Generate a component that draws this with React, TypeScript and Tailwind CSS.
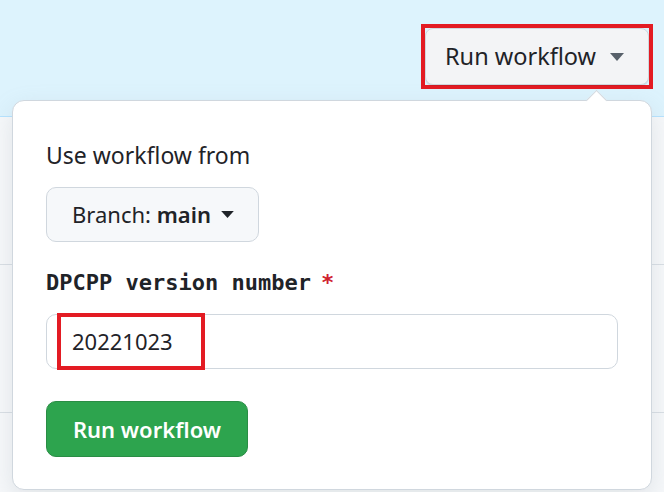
const sans = "font-['Segoe_UI','Noto_Sans','Open_Sans',sans-serif]"

const Caret = ({ className }: { className?: string }) => (
  <svg viewBox="0 0 16 10" className={className} fill="currentColor">
    <path d="M1 1h14L8 9z" />
  </svg>
)

export default function App() {
  return (
    <div className={`relative w-[664px] h-[492px] overflow-hidden bg-[#f6f8fa] text-[#1f2328] ${sans}`}>
      <div className="h-[117px] bg-[#ddf3fd] border-b border-[#b6e3ff] flex justify-end pt-[24px] pr-[11px]">
        <div className="h-[65px] border-4 border-[#e31b23]">
          <button className="h-[57px] w-[224px] flex items-center pl-[19px] gap-[13px] rounded-[8px] bg-[#f3f4f6] border border-[#d0d7de] shadow-[0_1px_0_rgba(31,35,40,0.1)] text-[23.5px]">
            Run workflow
            <Caret className="w-[16px] h-[10px] text-[#57606a]" />
          </button>
        </div>
      </div>
      <div className="h-[148px] border-b border-[#d8dee4]" />
      <div className="h-[148px] border-b border-[#d8dee4]" />

      <div className="absolute left-[12px] top-[100px] w-[640px] h-[390px] bg-white border border-[#d0d7de] rounded-[12px] shadow-[0_8px_24px_rgba(140,149,159,0.2)] px-[33px] pt-[39px]">
        <div className="absolute -top-[8px] left-[576px] w-[15px] h-[15px] rotate-45 bg-white border-l border-t border-[#d0d7de]" />
        <div className="text-[23px] leading-[30px]">Use workflow from</div>
        <button className="mt-[17px] h-[55px] w-[213px] flex items-center pl-[25px] gap-[9px] rounded-[10px] bg-[#f6f8fa] border border-[#d0d7de] text-[22px]">
          <span>
            Branch: <span className="font-semibold">main</span>
          </span>
          <Caret className="w-[15px] h-[9px] text-[#1f2328]" />
        </button>
        <div className="mt-[27px] text-[22px] leading-[28px] font-bold font-['DejaVu_Sans_Mono',monospace] flex gap-[10px]">
          <span>DPCPP version number</span>
          <span className="text-[#cf222e]">*</span>
        </div>
        <div className="relative mt-[17px] h-[55px] w-[572px] rounded-[10px] border border-[#d0d7de] flex items-center pl-[25px] text-[22px]">
          20221023
          <div className="absolute left-[10px] -top-[2px] w-[148px] h-[57px] border-4 border-[#e31b23]" />
        </div>
        <button className="mt-[32px] h-[56px] w-[202px] rounded-[10px] bg-[#2da44e] border border-[#2a8d45] text-white font-semibold text-[22px]">
          Run workflow
        </button>
      </div>
    </div>
  )
}
